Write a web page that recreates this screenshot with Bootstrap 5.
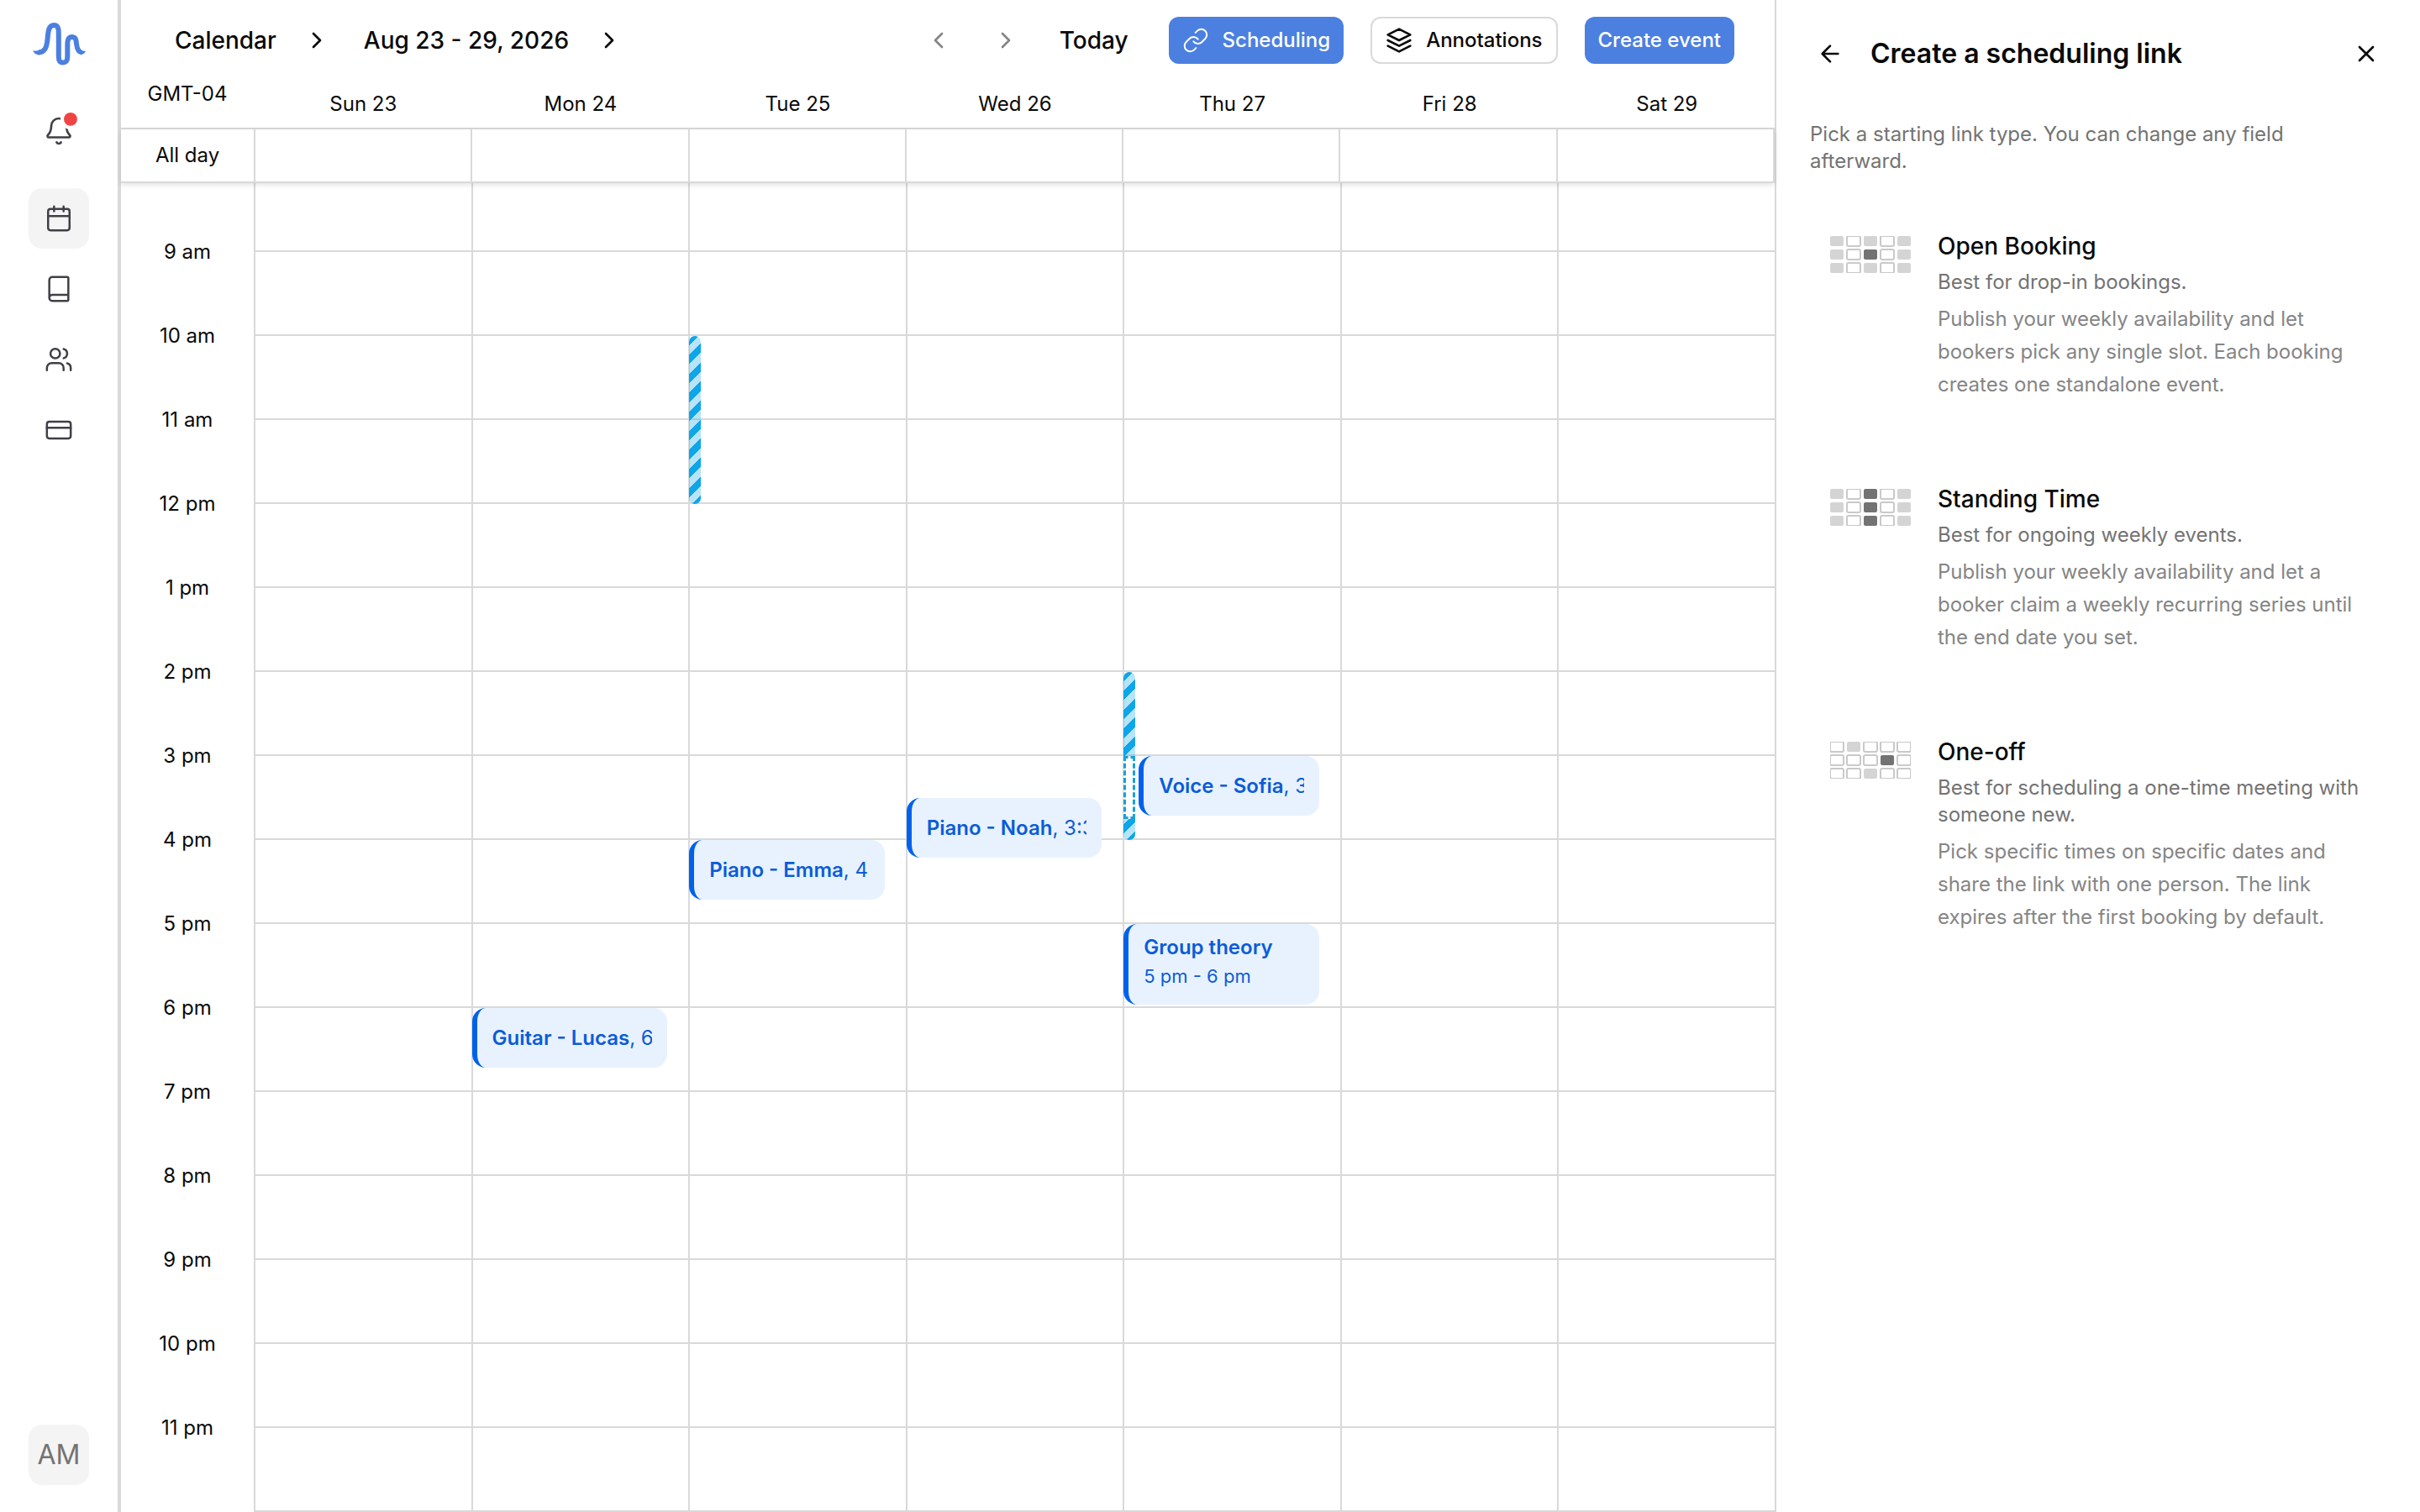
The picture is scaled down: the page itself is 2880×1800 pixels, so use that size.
<!DOCTYPE html>
<html lang="en">
<head>
<meta charset="utf-8">
<meta name="viewport" content="width=device-width, initial-scale=1">
<title>Calendar</title>
<link href="https://cdn.jsdelivr.net/npm/bootstrap@5.3.0/dist/css/bootstrap.min.css" rel="stylesheet">
<style>
  :root { --line: #d9d9d9; --accent: #4b80e1; --event: #0062eb; --sky: #0ea5e9; --hour: 100px; }
  body { font-family: Inter, "Liberation Sans", sans-serif; font-size: 24px; line-height: 32px; color: #0a0a0a; background: #fff; }
  svg { flex: none; fill: none; stroke: currentColor; stroke-linecap: round; stroke-linejoin: round; stroke-width: 2; }
  .ico { width: 32px; height: 32px; }
  .ico.thin { stroke-width: 1.5; }
  .plain { background: none; border: 0; padding: 0; color: inherit; }

  .rail { width: 144px; border-right: 4px solid var(--line); padding: 24px 0 32px; }
  .logo { height: 56px; margin-bottom: 40px; color: var(--accent); }
  .tile { width: 72px; height: 72px; border-radius: 16px; color: #3f3f46; }
  .tile svg { width: 34px; height: 34px; stroke-width: 1.75; }
  .tile .bell { width: 36px; height: 36px; overflow: visible; }
  .tile.on, .avatar { background: #f4f4f4; }
  .avatar { color: #737373; font-size: 32px; }
  .tiles { display: grid; gap: 12px; margin-top: 32px; }

  .topbar { padding: 20px 48px 20px 64px; height: 96px; font-size: 28px; font-weight: 500; }
  .crumbs { gap: 32px; }
  .crumbs .range { margin-left: 8px; }
  .act { height: 56px; padding: 0 16px; font-size: 24px; font-weight: 500; border-radius: 12px; border: 0; gap: 16px; }
  .act-fill, .act-fill:hover { background: var(--accent); color: #fff; }
  .act-line { border: 2px solid var(--line); background: #fff; color: #0a0a0a; }
  .muted-nav { color: #858585; }
  .today { margin: 0 48px; }
  .acts { gap: 32px; }

  .week { min-width: 0; }
  .gutter { width: 158px; flex: none; text-align: center; }
  .day-names { height: 58px; border-bottom: 2px solid var(--line); }
  .all-day { height: 64px; border-bottom: 2px solid var(--line); border-right: 2px solid var(--line); box-shadow: 0 2px 6px rgba(0,0,0,.12); z-index: 2; }
  .daycol { flex: 1 1 0; min-width: 0; border-left: 2px solid transparent; }
  .all-day .daycol, .hours .daycol { border-color: var(--line); }
  .hours { background: linear-gradient(transparent 98px, var(--line) 98px) 0 -18px / 100% 100px; }
  .times { padding-top: 32px; }
  .times div { height: var(--hour); display: flex; align-items: center; justify-content: center; }

  .ev, .slot { position: absolute; left: -1px; top: calc((var(--from) - 8) * var(--hour) - 18px); }
  .ev { right: 25px; height: calc((var(--to) - var(--from)) * var(--hour) - 4px); border-left: 6px solid var(--event); border-radius: 16px; background: #e8f2ff; color: #0b5cd7; padding: 0 18px; display: flex; flex-direction: column; justify-content: center; }
  .ev div { overflow: hidden; white-space: nowrap; }
  .ev b { font-weight: 600; }
  .ev.after-slot { left: 17px; }
  .ev.tall { justify-content: flex-start; padding-top: 12px; gap: 2px; }
  .ev.tall div + div { font-size: 22px; }
  .slot { width: 14px; height: calc((var(--to) - var(--from)) * var(--hour)); border-radius: 7px; background: repeating-linear-gradient(135deg, var(--sky) 0 8px, rgba(14,165,233,.3) 8px 16px); }
  .slot.taken { background: #fff; border: 3px dashed #1b9fdc; border-radius: 0; }

  .panel { width: 768px; border-left: 2px solid var(--line); padding: 40px; }
  .panel h1 { font-size: 32px; line-height: 48px; font-weight: 600; }
  .panel-head { padding: 0 8px; gap: 32px; }
  .intro { color: #737373; margin: 56px 48px 42px 0; }
  .kinds { display: grid; gap: 50px; }
  .kind { padding: 24px; gap: 32px; }
  .kind svg { width: 96px; height: 44px; margin-top: 7px; stroke: #c9c9c9; stroke-width: 2; }
  .kind h2 { font-size: 28px; line-height: 38px; font-weight: 500; margin-bottom: 8px; }
  .kind .best { color: #737373; margin-bottom: 8px; }
  .kind .about { color: #858585; line-height: 39px; margin: 0; }
  .lt { fill: #d4d4d4; stroke: none; }
  .dk { fill: #737373; stroke: none; }
</style>
<script src="https://cdn.jsdelivr.net/npm/bootstrap@5.3.0/dist/js/bootstrap.bundle.min.js"></script>
</head>
<body>
<div class="d-flex vh-100 overflow-hidden">

  <nav class="rail d-flex flex-column align-items-center flex-shrink-0" aria-label="Main">
    <a href="#" class="logo d-flex align-items-center" aria-label="Home">
      <svg width="64" height="52" viewBox="-1 -1 64 52">
        <path stroke-linecap="butt" style="stroke-width:6" d="M7 35.5C14 35 16.5 30 17.5 20C18.3 10 19 3 25 3C31 3 30.8 9 30.8 14V40C30.8 45 32 47.5 35.500 47.5C40 47.5 41.3 45 41.3 40V26C41.3 19 43 17 46.5 17C51 17 51.5 20 52 25C52.700 31 54 35 58 35.3"/>
        <path fill="currentColor" stroke="none" d="M0 33.5Q4 34 8 32.4V38.400Q3 38.500 0 33.5ZM63 34Q60 33.800 57 32.3V38.2Q61 38 63 34Z"/>
      </svg>
    </a>
    <button type="button" class="plain tile d-flex align-items-center justify-content-center" aria-label="Notifications">
      <svg class="bell" viewBox="0 0 24 24"><path d="M10.268 21a2 2 0 0 0 3.464 0M3.262 15.326A1 1 0 0 0 4 17h16a1 1 0 0 0 .74-1.673C19.41 13.956 18 12.499 18 8A6 6 0 0 0 6 8c0 4.499-1.411 5.956-2.738 7.326"/><circle cx="21.3" cy="2.6" r="8" fill="#fff" stroke="none"/><circle cx="21.3" cy="2.6" r="5.3" fill="#ef4444" stroke="none"/></svg>
    </button>
    <div class="tiles">
      <a href="#" class="tile on d-flex align-items-center justify-content-center" aria-label="Calendar"><svg viewBox="0 0 24 24"><path d="M8 2v4M16 2v4M3 10h18"/><rect x="3" y="4" width="18" height="18" rx="2"/></svg></a>
      <a href="#" class="tile d-flex align-items-center justify-content-center" aria-label="Library"><svg viewBox="0 0 24 24"><path d="M4 19.5v-15A2.5 2.5 0 0 1 6.5 2H19a1 1 0 0 1 1 1v18a1 1 0 0 1-1 1H6.5a1 1 0 0 1 0-5H20"/></svg></a>
      <a href="#" class="tile d-flex align-items-center justify-content-center" aria-label="People"><svg viewBox="0 0 24 24"><path d="M16 21v-2a4 4 0 0 0-4-4H6a4 4 0 0 0-4 4v2M22 21v-2a4 4 0 0 0-3-3.87M16 3.128a4 4 0 0 1 0 7.744"/><circle cx="9" cy="7" r="4"/></svg></a>
      <a href="#" class="tile d-flex align-items-center justify-content-center" aria-label="Billing"><svg viewBox="0 0 24 24"><rect x="2" y="5" width="20" height="14" rx="2"/><path d="M2 10h20"/></svg></a>
    </div>
    <button type="button" class="plain tile avatar mt-auto">AM</button>
  </nav>

  <main class="week flex-grow-1 d-flex flex-column">
    <header class="topbar d-flex align-items-center justify-content-between">
      <div class="crumbs d-flex align-items-center">
        <span>Calendar</span>
        <svg class="ico" viewBox="0 0 24 24"><path d="m9 18 6-6-6-6"/></svg>
        <span class="range">Aug 23 - 29, 2026</span>
        <svg class="ico" viewBox="0 0 24 24"><path d="m9 18 6-6-6-6"/></svg>
      </div>
      <div class="d-flex align-items-center">
        <div class="muted-nav d-flex gap-5">
          <button type="button" class="plain d-flex" aria-label="Previous week"><svg class="ico" viewBox="0 0 24 24"><path d="m15 18-6-6 6-6"/></svg></button>
          <button type="button" class="plain d-flex" aria-label="Next week"><svg class="ico" viewBox="0 0 24 24"><path d="m9 18 6-6-6-6"/></svg></button>
        </div>
        <button type="button" class="plain today fw-medium">Today</button>
        <div class="acts d-flex">
          <button type="button" class="btn act act-fill d-flex align-items-center"><svg class="ico thin" viewBox="0 0 24 24"><path d="M10 13a5 5 0 0 0 7.54.54l3-3a5 5 0 0 0-7.07-7.07l-1.72 1.71M14 11a5 5 0 0 0-7.54-.54l-3 3a5 5 0 0 0 7.07 7.07l1.71-1.71"/></svg>Scheduling</button>
          <button type="button" class="btn act act-line d-flex align-items-center"><svg class="ico" viewBox="0 0 24 24"><path d="M12 2 2 7l10 5 10-5ZM2 17l10 5 10-5M2 12l10 5 10-5"/></svg>Annotations</button>
          <button type="button" class="btn act act-fill">Create event</button>
        </div>
      </div>
    </header>

    <div class="day-names d-flex text-center flex-shrink-0">
      <div class="gutter">GMT-04</div>
      <div class="daycol align-self-center">Sun 23</div>
      <div class="daycol align-self-center">Mon 24</div>
      <div class="daycol align-self-center">Tue 25</div>
      <div class="daycol align-self-center">Wed 26</div>
      <div class="daycol align-self-center">Thu 27</div>
      <div class="daycol align-self-center">Fri 28</div>
      <div class="daycol align-self-center">Sat 29</div>
    </div>
    <div class="all-day d-flex flex-shrink-0 position-relative">
      <div class="gutter align-self-center">All day</div>
      <div class="daycol"></div><div class="daycol"></div><div class="daycol"></div><div class="daycol"></div><div class="daycol"></div><div class="daycol"></div><div class="daycol"></div>
    </div>

    <div class="d-flex flex-grow-1 overflow-hidden">
      <div class="gutter times">
        <div>9 am</div><div>10 am</div><div>11 am</div><div>12 pm</div><div>1 pm</div><div>2 pm</div><div>3 pm</div><div>4 pm</div><div>5 pm</div><div>6 pm</div><div>7 pm</div><div>8 pm</div><div>9 pm</div><div>10 pm</div><div>11 pm</div>
      </div>
      <div class="hours d-flex flex-grow-1">
        <div class="daycol"></div>
        <div class="daycol position-relative">
          <div class="ev" style="--from:18;--to:18.75"><div><b>Guitar - Lucas</b>, 6 pm</div></div>
        </div>
        <div class="daycol position-relative">
          <div class="slot" style="--from:10;--to:12"></div>
          <div class="ev" style="--from:16;--to:16.75"><div><b>Piano - Emma</b>, 4 pm</div></div>
        </div>
        <div class="daycol position-relative">
          <div class="ev" style="--from:15.5;--to:16.25"><div><b>Piano - Noah</b>, 3:30 pm</div></div>
        </div>
        <div class="daycol position-relative">
          <div class="slot" style="--from:14;--to:16"></div>
          <div class="slot taken" style="--from:15;--to:15.75"></div>
          <div class="ev after-slot" style="--from:15;--to:15.75"><div><b>Voice - Sofia</b>, 3 pm</div></div>
          <div class="ev tall" style="--from:17;--to:18"><div><b>Group theory</b></div><div>5 pm - 6 pm</div></div>
        </div>
        <div class="daycol"></div>
        <div class="daycol"></div>
      </div>
    </div>
  </main>

  <aside class="panel flex-shrink-0">
    <div class="panel-head d-flex align-items-center">
      <button type="button" class="plain d-flex" aria-label="Back"><svg class="ico" viewBox="0 0 24 24"><path d="m12 19-7-7 7-7M19 12H5"/></svg></button>
      <h1 class="m-0 flex-grow-1">Create a scheduling link</h1>
      <button type="button" class="plain d-flex" aria-label="Close"><svg class="ico" viewBox="0 0 24 24"><path d="M18 6 6 18M6 6l12 12"/></svg></button>
    </div>
    <p class="intro">Pick a starting link type. You can change any field afterward.</p>
    <div class="kinds">
      <button type="button" class="plain kind d-flex align-items-start text-start">
        <svg viewBox="0 0 96 44">
          <g class="lt"><rect width="16" height="12" rx="2"/><rect x="40" width="16" height="12" rx="2"/><rect x="80" width="16" height="12" rx="2"/><rect y="16" width="16" height="12" rx="2"/><rect x="80" y="16" width="16" height="12" rx="2"/><rect y="32" width="16" height="12" rx="2"/><rect x="40" y="32" width="16" height="12" rx="2"/><rect x="80" y="32" width="16" height="12" rx="2"/></g>
          <rect x="20" width="16" height="12" rx="2"/><rect x="60" width="16" height="12" rx="2"/><rect x="20" y="16" width="16" height="12" rx="2"/><rect x="60" y="16" width="16" height="12" rx="2"/><rect x="20" y="32" width="16" height="12" rx="2"/><rect x="60" y="32" width="16" height="12" rx="2"/>
          <rect class="dk" x="40" y="16" width="16" height="12" rx="2"/>
        </svg>
        <div><h2>Open Booking</h2><p class="best">Best for drop-in bookings.</p><p class="about">Publish your weekly availability and let bookers pick any single slot. Each booking creates one standalone event.</p></div>
      </button>
      <button type="button" class="plain kind d-flex align-items-start text-start">
        <svg viewBox="0 0 96 44">
          <g class="lt"><rect width="16" height="12" rx="2"/><rect x="80" width="16" height="12" rx="2"/><rect y="16" width="16" height="12" rx="2"/><rect x="80" y="16" width="16" height="12" rx="2"/><rect y="32" width="16" height="12" rx="2"/><rect x="80" y="32" width="16" height="12" rx="2"/></g>
          <rect x="20" width="16" height="12" rx="2"/><rect x="60" width="16" height="12" rx="2"/><rect x="20" y="16" width="16" height="12" rx="2"/><rect x="60" y="16" width="16" height="12" rx="2"/><rect x="20" y="32" width="16" height="12" rx="2"/><rect x="60" y="32" width="16" height="12" rx="2"/>
          <g class="dk"><rect x="40" width="16" height="12" rx="2"/><rect x="40" y="16" width="16" height="12" rx="2"/><rect x="40" y="32" width="16" height="12" rx="2"/></g>
        </svg>
        <div><h2>Standing Time</h2><p class="best">Best for ongoing weekly events.</p><p class="about">Publish your weekly availability and let a booker claim a weekly recurring series until the end date you set.</p></div>
      </button>
      <button type="button" class="plain kind d-flex align-items-start text-start">
        <svg viewBox="0 0 96 44">
          <rect width="16" height="12" rx="2"/><rect x="40" width="16" height="12" rx="2"/><rect x="60" width="16" height="12" rx="2"/><rect x="80" width="16" height="12" rx="2"/><rect y="16" width="16" height="12" rx="2"/><rect x="20" y="16" width="16" height="12" rx="2"/><rect x="40" y="16" width="16" height="12" rx="2"/><rect x="80" y="16" width="16" height="12" rx="2"/><rect y="32" width="16" height="12" rx="2"/><rect x="20" y="32" width="16" height="12" rx="2"/><rect x="60" y="32" width="16" height="12" rx="2"/><rect x="80" y="32" width="16" height="12" rx="2"/>
          <g class="lt"><rect x="20" width="16" height="12" rx="2"/><rect x="40" y="32" width="16" height="12" rx="2"/></g>
          <rect class="dk" x="60" y="16" width="16" height="12" rx="2"/>
        </svg>
        <div><h2>One-off</h2><p class="best">Best for scheduling a one-time meeting with someone new.</p><p class="about">Pick specific times on specific dates and share the link with one person. The link expires after the first booking by default.</p></div>
      </button>
    </div>
  </aside>
</div>
</body>
</html>
